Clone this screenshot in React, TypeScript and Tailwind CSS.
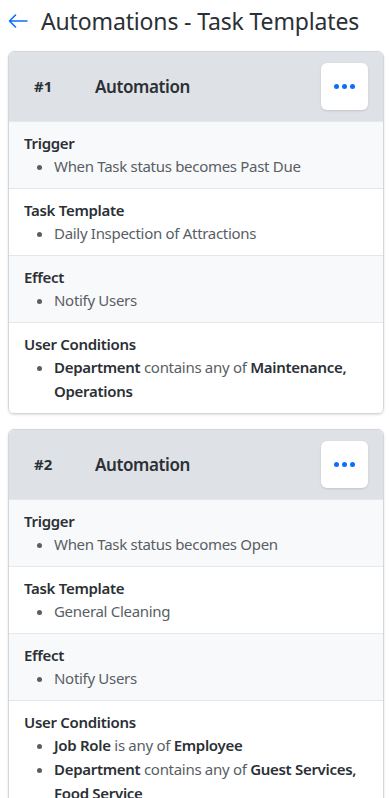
const AUTOMATIONS = [
  {
    id: 1,
    trigger: "When Task status becomes Past Due",
    template: "Daily Inspection of Attractions",
    effect: "Notify Users",
    conditions: [{ field: "Department", op: "contains any of", value: "Maintenance, Operations" }],
  },
  {
    id: 2,
    trigger: "When Task status becomes Open",
    template: "General Cleaning",
    effect: "Notify Users",
    conditions: [
      { field: "Job Role", op: "is any of", value: "Employee" },
      { field: "Department", op: "contains any of", value: "Guest Services, Food Service" },
    ],
  },
];

function Section({ label, shaded, children }: { label: string; shaded?: boolean; children: React.ReactNode }) {
  return (
    <div className={`px-[15px] py-[10px] border-t border-[#e5e8eb] ${shaded ? "bg-[#f8f9fa]" : "bg-white"}`}>
      <div className="text-[15px] leading-[22px] font-semibold text-[#2b3035] tracking-[-0.3px]">{label}</div>
      <ul className="list-disc pl-[30px] text-[15px] leading-[24px] text-[#585e64] tracking-[-0.3px]">{children}</ul>
    </div>
  );
}

export default function App() {
  return (
    <div className="min-h-screen bg-white pb-6" style={{ fontFamily: '"Noto Sans", sans-serif' }}>
      <div className="flex items-center h-[42px] pl-[8px]">
        <svg width="20" height="14" viewBox="0 0 20 14" fill="none" stroke="#0d6efd" strokeWidth="1.6" strokeLinecap="round" strokeLinejoin="round">
          <path d="M19 7H1.5M7.5 1L1.5 7l6 6" />
        </svg>
        <h1 className="ml-[13px] text-[23px] text-[#2b3035] tracking-[-0.15px]">Automations - Task Templates</h1>
      </div>

      <div className="flex flex-col gap-[15px] mt-[9px] ml-[8px] w-[376px]">
        {AUTOMATIONS.map((a) => (
          <div key={a.id} className="rounded-[6px] border border-[#d3d7db] overflow-hidden shadow-sm">
            <div className="flex items-center bg-[#dee2e6] pl-[25px] pr-[15px] py-[11px]">
              <span className="w-[61px] text-[15px] font-bold text-[#2b3035]">#{a.id}</span>
              <span className="flex-1 text-[17px] font-semibold text-[#2b3035] tracking-[-0.4px]">Automation</span>
              <button className="w-[47px] h-[47px] rounded-[6px] bg-white shadow-sm flex items-center justify-center gap-[3px]">
                <span className="w-[5px] h-[5px] rounded-full bg-[#0d6efd]" />
                <span className="w-[5px] h-[5px] rounded-full bg-[#0d6efd]" />
                <span className="w-[5px] h-[5px] rounded-full bg-[#0d6efd]" />
              </button>
            </div>
            <Section label="Trigger" shaded>
              <li>{a.trigger}</li>
            </Section>
            <Section label="Task Template">
              <li>{a.template}</li>
            </Section>
            <Section label="Effect" shaded>
              <li>{a.effect}</li>
            </Section>
            <Section label="User Conditions">
              {a.conditions.map((c, i) => (
                <li key={i}>
                  <span className="font-semibold text-[#2b3035]">{c.field}</span> {c.op}{" "}
                  <span className="font-semibold text-[#2b3035]">{c.value}</span>
                </li>
              ))}
            </Section>
          </div>
        ))}
      </div>
    </div>
  );
}
